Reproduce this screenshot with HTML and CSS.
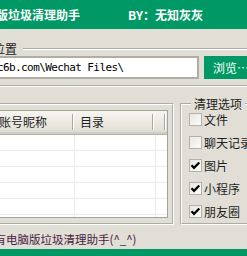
FILE: index.html
```html
<!DOCTYPE html>
<html lang="zh-CN">
<head>
  <meta charset="UTF-8">
  <title>微信电脑版垃圾清理助手</title>
  <link rel="stylesheet" href="styles.css">
</head>
<body>
  <div class="titlebar">
    <span class="title">微信电脑版垃圾清理助手</span>
    <span class="author">BY：无知灰灰</span>
  </div>

  <fieldset class="group path-group">
    <legend>位置</legend>
    <div class="path-row">
      <input class="path-input" type="text" value="c6b.com\Wechat Files\">
      <button class="btn-browse">浏览…</button>
    </div>
  </fieldset>

  <div class="lower">
    <fieldset class="group list-group">
      <div class="listview">
        <div class="lv-header">
          <div class="lv-col col-name">账号昵称</div><span class="lv-sep"></span>
          <div class="lv-col col-dir">目录</div><span class="lv-sep"></span>
          <div class="lv-col col-extra"></div><span class="lv-sep"></span>
        </div>
        <div class="lv-row"><div class="cell c1"></div><div class="cell c2"></div><div class="cell c3"></div></div>
        <div class="lv-row"><div class="cell c1"></div><div class="cell c2"></div><div class="cell c3"></div></div>
        <div class="lv-row"><div class="cell c1"></div><div class="cell c2"></div><div class="cell c3"></div></div>
        <div class="lv-row"><div class="cell c1"></div><div class="cell c2"></div><div class="cell c3"></div></div>
        <div class="lv-row"><div class="cell c1"></div><div class="cell c2"></div><div class="cell c3"></div></div>
        <div class="lv-row"><div class="cell c1"></div><div class="cell c2"></div><div class="cell c3"></div></div>
      </div>
    </fieldset>

    <fieldset class="group options-group">
      <legend>清理选项</legend>
      <div class="options">
        <label class="opt"><span class="box"></span>文件</label>
        <label class="opt"><span class="box"></span>聊天记录</label>
        <label class="opt"><span class="box"><svg width="11" height="11" viewBox="0 0 11 11"><path d="M1.5 5.2 L4 7.8 L9.3 2.4" stroke="#000" stroke-width="2.2" fill="none"/></svg></span>图片</label>
        <label class="opt"><span class="box"><svg width="11" height="11" viewBox="0 0 11 11"><path d="M1.5 5.2 L4 7.8 L9.3 2.4" stroke="#000" stroke-width="2.2" fill="none"/></svg></span>小程序</label>
        <label class="opt"><span class="box"><svg width="11" height="11" viewBox="0 0 11 11"><path d="M1.5 5.2 L4 7.8 L9.3 2.4" stroke="#000" stroke-width="2.2" fill="none"/></svg></span>朋友圈</label>
      </div>
    </fieldset>
  </div>

  <div class="status">所有电脑版垃圾清理助手(^_^)</div>
  <div class="bottom-bar"></div>
</body>
</html>
```

FILE: styles.css
```css
:root {
  --green: #009864;
  --face: #e1ded6;
  --edge: #aca899;
}
* { box-sizing: border-box; }
body { margin: 0; width: 247px; height: 256px; overflow: hidden; background: var(--face); font-family: "Noto Sans CJK SC", "Noto Sans", sans-serif; font-size: 12px; color: #1e1e1e; }

.titlebar { height: 29px; background: var(--green); color: #fff; font-weight: 700; font-size: 12px; display: flex; align-items: center; white-space: nowrap; }
.title { margin-left: -52px; }
.author { margin-left: 48px; }

.group { border: 2px groove #fff; margin: 0; padding: 0; min-width: 0; }
.group legend { line-height: 14px; font-size: 12px; }

.path-group { margin: 13px 0 0 -18px; width: 290px; padding: 0 0 6px 6px; }
.path-group legend { padding: 0 6px 0 3px; }
.path-row { display: flex; }
.path-input { margin-left: 1px; width: 208px; height: 23px; border: 2px solid #b0ada5; padding: 0 0 0 4px; font-family: "DejaVu Sans Mono", monospace; font-size: 11px; letter-spacing: -0.6px; color: #000; background: #fff; outline: none; }
.btn-browse { margin-left: 5px; width: 60px; height: 23px; border: none; background: var(--green); color: #fff; font-family: "Noto Sans CJK SC", sans-serif; font-size: 12px; text-align: left; padding: 0 0 0 9px; }

.lower { display: flex; margin: 10px 0 0 -20px; width: 300px; }
.list-group { flex: none; width: 194px; margin-top: 6px; padding: 5px 4px 5px 4px; }
.options-group { flex: none; width: 90px; margin-left: 6px; padding: 0 0 0 7px; }
.options-group legend { margin-left: 2px; padding: 0 3px; }

.listview { height: 108px; overflow: hidden; background: #fff; border: 1px solid #a5a299; }
.lv-header { display: flex; height: 24px; background: linear-gradient(#f6f5f0, #e9e7df 60%, #dcd9cf); border-bottom: 1px solid #b5b2a8; box-shadow: inset 0 -2px #d0cdc3; }
.lv-col { line-height: 22px; white-space: nowrap; }
.col-name { width: 85px; padding-left: 12px; }
.col-dir { width: 78px; padding-left: 6px; }
.col-extra { width: 10px; }
.lv-sep { width: 2px; margin: 3px 0 4px; border-left: 1px solid #aca899; border-right: 1px solid #fff; }

.lv-row { display: flex; height: 16px; border-bottom: 1px solid #ebebeb; }
.cell { height: 100%; }
.c1 { width: 88px; border-right: 1px solid #ebebeb; }
.c2 { width: 81px; border-right: 1px solid #ebebeb; }
.c3 { flex: 1; }

.options { margin-top: -3px; display: flex; flex-direction: column; }
.opt { height: 23px; display: flex; align-items: center; gap: 2px; white-space: nowrap; }
.box { width: 13px; height: 13px; border: 1px solid #b3b1a9; background: linear-gradient(135deg, #e8e7e1, #fbfbf9); display: flex; align-items: center; justify-content: center; }

.status { margin: 4px 0 0 -17px; line-height: 20px; font-size: 11.5px; color: #4a2244; white-space: nowrap; }
.bottom-bar { height: 7px; background: var(--green); }
```
